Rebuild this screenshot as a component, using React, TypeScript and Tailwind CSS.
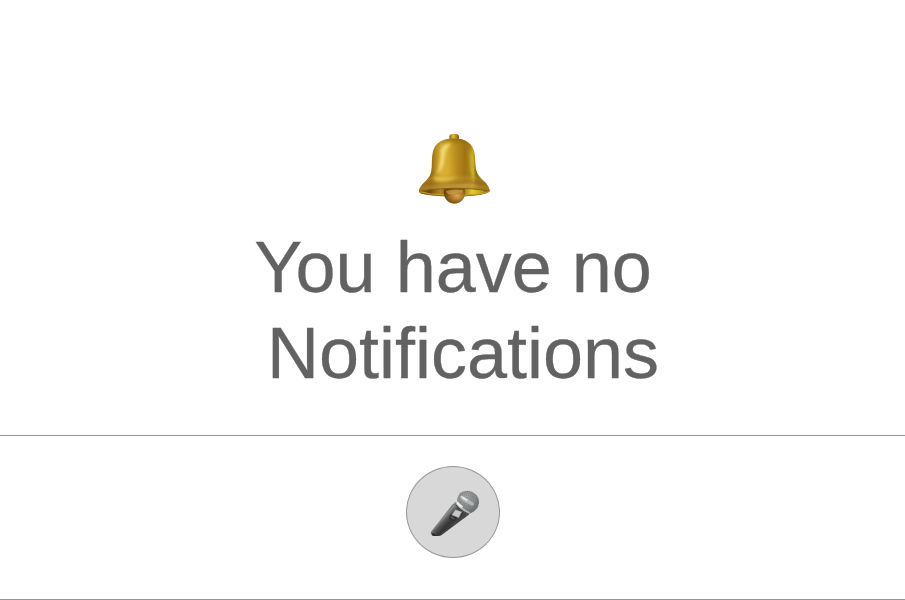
const bellShape =
  "M112 42Q132 38 155 43C178 50 191 64 194 87C197 111 194 136 207 153C216 166 236 176 239 196Q239 203 224 206Q184 215 132 214Q78 215 39 207Q26 204 27 197C31 179 48 171 59 153C69 135 63 110 68 84C73 59 88 47 112 42Z";

function Bell() {
  return (
    <svg className="h-[85px] w-[90px]" viewBox="0 0 270 255" role="img" aria-label="Bell">
      <defs>
        <linearGradient id="bellBody" x1="62" x2="198" y1="0" y2="0" gradientUnits="userSpaceOnUse">
          <stop offset="0" stopColor="#8b6409" />
          <stop offset=".1" stopColor="#b88a1b" />
          <stop offset=".24" stopColor="#d8b13a" />
          <stop offset=".38" stopColor="#d6af2f" />
          <stop offset=".55" stopColor="#bb901e" />
          <stop offset=".75" stopColor="#a07315" />
          <stop offset=".86" stopColor="#a87d17" />
          <stop offset=".94" stopColor="#c4ac25" />
          <stop offset="1" stopColor="#806708" />
        </linearGradient>
        <linearGradient id="bellShade" x1="0" x2="0" y1="42" y2="208" gradientUnits="userSpaceOnUse">
          <stop offset="0" stopColor="#7e5906" stopOpacity=".6" />
          <stop offset=".12" stopColor="#9a7011" stopOpacity=".1" />
          <stop offset=".62" stopColor="#b08618" stopOpacity="0" />
          <stop offset=".7" stopColor="#c89a30" stopOpacity=".4" />
          <stop offset=".8" stopColor="#9b6e27" stopOpacity=".7" />
          <stop offset=".88" stopColor="#b08729" stopOpacity=".75" />
          <stop offset="1" stopColor="#8a610e" stopOpacity=".9" />
        </linearGradient>
        <linearGradient id="bellLip" x1="27" x2="239" y1="0" y2="0" gradientUnits="userSpaceOnUse">
          <stop offset="0" stopColor="#8d651c" />
          <stop offset=".15" stopColor="#6a480e" />
          <stop offset=".3" stopColor="#b48825" />
          <stop offset=".4" stopColor="#785614" />
          <stop offset=".63" stopColor="#927512" />
          <stop offset=".75" stopColor="#e0d02a" />
          <stop offset=".88" stopColor="#c0a31f" />
          <stop offset="1" stopColor="#76540d" />
        </linearGradient>
        <radialGradient id="bellClapper" cx=".62" cy=".48" r=".6">
          <stop offset="0" stopColor="#dca853" />
          <stop offset=".4" stopColor="#b58032" />
          <stop offset=".75" stopColor="#8b5d18" />
          <stop offset="1" stopColor="#634108" />
        </radialGradient>
        <linearGradient id="bellKnob">
          <stop offset="0" stopColor="#8c5e08" />
          <stop offset=".4" stopColor="#e5bd45" />
          <stop offset="1" stopColor="#815405" />
        </linearGradient>
        <filter id="bellSoft" x="-50%" y="-50%" width="200%" height="200%">
          <feGaussianBlur stdDeviation="5" />
        </filter>
      </defs>
      <rect x="118" y="27" width="29" height="23" rx="9" fill="url(#bellKnob)" />
      <path d={bellShape} fill="url(#bellBody)" />
      <path d={bellShape} fill="url(#bellShade)" />
      <path d="M92 74Q103 52 125 55Q106 70 104 97Q101 132 80 151Q93 107 92 74Z" fill="#ffe98c" opacity=".75" filter="url(#bellSoft)" />
      <path d="M178 72Q193 89 188 119Q186 145 203 162Q179 151 180 120Z" fill="#dccb32" opacity=".6" filter="url(#bellSoft)" />
      <path d="M69 154Q110 164 143 153Q121 172 78 168Z" fill="#f0cc4a" opacity=".75" filter="url(#bellSoft)" />
      <path d="M76 177Q120 183 178 174Q201 178 209 186Q140 191 76 177Z" fill="#d9b645" opacity=".6" filter="url(#bellSoft)" />
      <path d="M28 199Q75 190 132 190Q199 190 238 199Q220 211 132 212Q50 212 28 199Z" fill="url(#bellLip)" />
      <path d="M28 199Q74 190 132 190Q199 190 238 199" fill="none" stroke="#7e5915" strokeWidth="2.5" />
      <path d="M30 200Q62 210 105 209M161 210Q215 209 236 200" fill="none" stroke="#c8a02e" strokeWidth="3" />
      <path d="M103 193Q132 189 164 193C169 214 158 235 134 236C111 236 98 216 103 193Z" fill="url(#bellClapper)" />
      <path d="M108 197Q132 192 160 196L157 203Q140 200 130 208Q116 211 108 202Z" fill="#dba64a" opacity=".6" />
    </svg>
  );
}

function Microphone() {
  return (
    <svg className="h-[55px] w-[60px]" viewBox="0 0 180 165" role="img" aria-label="Microphone">
      <defs>
        <linearGradient id="micHandle" x1="47" y1="87" x2="85" y2="123" gradientUnits="userSpaceOnUse">
          <stop offset="0" stopColor="#646565" />
          <stop offset=".2" stopColor="#8b8c8c" />
          <stop offset=".4" stopColor="#555656" />
          <stop offset=".65" stopColor="#343535" />
          <stop offset="1" stopColor="#444545" />
        </linearGradient>
        <radialGradient id="micHead" cx=".4" cy=".3" r=".75">
          <stop offset="0" stopColor="#b0b3b3" />
          <stop offset=".6" stopColor="#8e9191" />
          <stop offset="1" stopColor="#6b6d6d" />
        </radialGradient>
        <pattern id="micMesh" width="6" height="6" patternUnits="userSpaceOnUse" patternTransform="rotate(12)">
          <path d="M0 0H6M0 0V6" stroke="#505353" strokeWidth="2" />
        </pattern>
      </defs>
      <path d="M93 47L134 83Q124 92 110 102L53 145Q48 150 42 150H24Q16 146 18 137L74 66Q82 54 93 47Z" fill="url(#micHandle)" />
      <path d="M24 149L19 143Q27 138 34 149Z" fill="#292a2a" />
      <path d="M104 22Q121 9 142 18Q163 29 162 50Q160 71 137 82Q119 80 102 64Q89 48 104 22Z" fill="url(#micHead)" />
      <path d="M104 22Q121 9 142 18Q163 29 162 50Q160 71 137 82Q119 80 102 64Q89 48 104 22Z" fill="url(#micMesh)" opacity=".65" />
      <path d="M106 29Q103 35 111 42Q125 54 143 59Q148 56 146 51Q130 39 114 30Z" fill="#b3b6b6" />
      <path d="M108 32Q113 41 124 46L129 42Q121 34 110 30Z" fill="#e3e5e5" />
      <path d="M97 46Q108 65 135 79L132 83Q107 74 93 53Z" fill="#b0b2b2" />
      <path d="M97 46Q92 51 98 57L110 66L114 61Q104 54 97 46Z" fill="#f0f1f1" />
      <path d="M91 55Q105 76 130 86" fill="none" stroke="#4c4e4e" strokeWidth="3" />
      <path d="M91 71L110 77L101 95L81 87Z" fill="#cbc6c6" stroke="#929090" strokeWidth="1.5" />
      <path d="M77 86L84 93L93 95L88 104Q79 103 73 97Z" fill="#393a3a" stroke="#202121" strokeWidth="1.5" />
      <path d="M78 92L88 99" stroke="#979797" strokeWidth="1.5" />
    </svg>
  );
}

export default function App() {
  return (
    <main className="flex h-[600px] w-full flex-col overflow-hidden bg-white font-['Liberation_Sans',Arial,sans-serif]">
      <section className="flex h-[436px] shrink-0 flex-col items-center border-b border-[#979797] pt-[125px]">
        <div className="flex w-full justify-center pl-[5px]">
          <Bell />
        </div>
        <h1 className="mt-[14px] whitespace-pre pl-px text-center text-[72px] font-normal leading-[86px] text-[#626262] [-webkit-text-stroke:0.3px_#626262]">
          {"You have no\n Notifications"}
        </h1>
      </section>
      <section className="flex h-[164px] shrink-0 items-start justify-center border-b border-[#979797] pt-[30px] pl-[1px]">
        <button type="button" aria-label="Record" className="flex h-[92px] w-[94px] items-center justify-center rounded-[50%] border border-[#979797] bg-[#d8d8d8] pl-[3px] pt-[3px]">
          <Microphone />
        </button>
      </section>
    </main>
  );
}
